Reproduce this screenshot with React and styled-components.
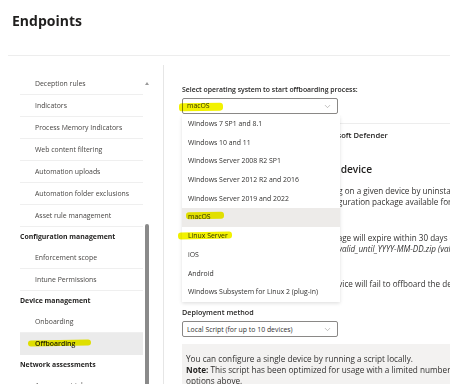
import React from 'react';
import styled, { createGlobalStyle } from 'styled-components';
import { ChevronDown } from 'lucide-react';

const GlobalStyle = createGlobalStyle`
  html, body {
    margin: 0;
    padding: 0;
    background: #fff;
    overflow: hidden;
  }
  body {
    font-family: 'Open Sans', 'Noto Sans', sans-serif;
    color: #323130;
  }
`;

const Page = styled.div`
  width: 450px;
  height: 384px;
  overflow: hidden;
`;

const Header = styled.header`
  height: 56px;
  margin-left: 8px;
  padding: 11px 0 0 4px;
  box-sizing: border-box;
  border-bottom: 1px solid #ededed;
`;

const Title = styled.h1`
  margin: 0;
  font-size: 14px;
  line-height: 20px;
  font-weight: 700;
  color: #201f1e;
`;

const Body = styled.div`
  display: flex;
  padding-top: 9px;
  height: 330px;
`;

const Nav = styled.nav`
  width: 123px;
  margin-left: 20px;
  padding-top: 8px;
  flex-shrink: 0;
`;

const NavGroup = styled.div`
  height: 20px;
  line-height: 20px;
  font-size: 6.9px;
  font-weight: 700;
  color: #201f1e;
  white-space: nowrap;
`;

const NavItem = styled.div`
  height: 22px;
  line-height: 22px;
  padding-left: 15px;
  font-size: 6.9px;
  font-weight: ${p => (p.$active ? 600 : 400)};
  color: ${p => (p.$active ? '#201f1e' : '#484644')};
  background: ${p => (p.$active ? '#ebebeb' : 'transparent')};
  border-bottom: 1px solid ${p => (p.$active ? '#ebebeb' : '#efefef')};
  box-sizing: border-box;
  white-space: nowrap;
`;

const Scrollbar = styled.div`
  width: 7px;
  margin-right: 13px;
  padding-top: 8px;
  display: flex;
  flex-direction: column;
  align-items: center;
  flex-shrink: 0;
`;

const ArrowUp = styled.div`
  width: 0;
  height: 0;
  margin-top: 9px;
  border-left: 2.5px solid transparent;
  border-right: 2.5px solid transparent;
  border-bottom: 3px solid #9a9a9a;
`;

const Thumb = styled.div`
  width: 4px;
  margin-top: 139px;
  flex: 1;
  border-radius: 2px;
  background: #8a8a8a;
`;

const Main = styled.main`
  position: relative;
  flex-shrink: 0;
  width: 420px;
  border-left: 1px solid #e6e6e6;
  padding: 20px 0 0 18px;
`;

const Label = styled.div`
  font-size: ${p => p.$size || 6.9}px;
  line-height: 10px;
  font-weight: 600;
  color: #201f1e;
  margin-top: ${p => p.$top || 0}px;
  margin-bottom: ${p => p.$gap || 3}px;
  white-space: nowrap;
`;

const SelectWrap = styled.div`
  position: relative;
  width: 156px;
`;

const SelectBox = styled.div`
  height: 16px;
  box-sizing: border-box;
  border: 1px solid #8a8886;
  border-radius: 2px;
  padding: 0 5px 0 4px;
  display: flex;
  align-items: center;
  justify-content: space-between;
  font-size: 6.9px;
  color: #323130;
  background: #fff;
  white-space: nowrap;

  svg {
    color: #8a8886;
  }
`;

const Menu = styled.ul`
  position: absolute;
  top: calc(100% + 1px);
  left: 0;
  width: 158px;
  margin: 0;
  padding: 0;
  list-style: none;
  background: #fff;
  box-shadow: 0 1.6px 3.6px rgba(0, 0, 0, 0.13), 0 0.3px 0.9px rgba(0, 0, 0, 0.11);
  z-index: 5;
`;

const Option = styled.li`
  height: 18.7px;
  line-height: 18.7px;
  padding-left: 6px;
  font-size: 6.9px;
  color: #323130;
  background: ${p => (p.$selected ? '#edebe9' : '#fff')};
  white-space: nowrap;
`;

const Marker = styled.span`
  position: relative;
  display: inline-block;
  line-height: 10px;

  &::after {
    content: '';
    position: absolute;
    left: ${p => p.$l}px;
    right: ${p => p.$r}px;
    top: ${p => p.$t}px;
    height: ${p => p.$h}px;
    background: #f2f200;
    border-radius: 3px;
    transform: rotate(${p => p.$rot || -1}deg);
    mix-blend-mode: multiply;
  }
`;

const Section = styled.section`
  margin-top: 9px;
  border-top: 1px solid #ededed;
  padding-top: 6px;
`;

const Caption = styled.div`
  font-size: 7.6px;
  line-height: 10px;
  font-weight: 600;
  color: #201f1e;
  white-space: nowrap;
`;

const Heading = styled.h3`
  margin: 22px 0 0;
  font-size: 10.2px;
  line-height: 14px;
  font-weight: 600;
  color: #201f1e;
  white-space: nowrap;
`;

const Para = styled.p`
  margin: ${p => p.$top}px 0 0;
  font-size: 8.1px;
  line-height: 11px;
  color: #323130;
  white-space: nowrap;

  em {
    font-style: italic;
  }
`;

const Block = styled.div`
  margin-top: 7px;
  padding: 9px 4px 0;
  height: 60px;
  background: #f3f2f1;
  font-size: 8.2px;
  line-height: 11px;
  color: #323130;
  white-space: nowrap;

  b {
    font-weight: 700;
    color: #201f1e;
  }
`;

const navRows = [
  { label: 'Deception rules' },
  { label: 'Indicators' },
  { label: 'Process Memory Indicators' },
  { label: 'Web content filtering' },
  { label: 'Automation uploads' },
  { label: 'Automation folder exclusions' },
  { label: 'Asset rule management' },
  { label: 'Configuration management', group: true },
  { label: 'Enforcement scope' },
  { label: 'Intune Permissions' },
  { label: 'Device management', group: true },
  { label: 'Onboarding' },
  { label: 'Offboarding', active: true },
  { label: 'Network assessments', group: true },
  { label: 'Assessment jobs' },
];

const systems = [
  'Windows 7 SP1 and 8.1',
  'Windows 10 and 11',
  'Windows Server 2008 R2 SP1',
  'Windows Server 2012 R2 and 2016',
  'Windows Server 2019 and 2022',
  'macOS',
  'Linux Server',
  'iOS',
  'Android',
  'Windows Subsystem for Linux 2 (plug-in)',
];

function OptionLabel({ name }) {
  if (name === 'macOS') {
    return <Marker $l={-2} $r={-13} $t={0} $h={7}>{name}</Marker>;
  }
  if (name === 'Linux Server') {
    return <Marker $l={-10} $r={-4} $t={0.5} $h={7}>{name}</Marker>;
  }
  return name;
}

export default function App() {
  return (
    <Page>
      <GlobalStyle />
      <Header>
        <Title>Endpoints</Title>
      </Header>
      <Body>
        <Nav>
          {navRows.map(row =>
            row.group ? (
              <NavGroup key={row.label}>{row.label}</NavGroup>
            ) : (
              <NavItem key={row.label} $active={row.active}>
                {row.active ? (
                  <Marker $l={-7} $r={-16} $t={1} $h={6}>{row.label}</Marker>
                ) : (
                  row.label
                )}
              </NavItem>
            )
          )}
        </Nav>
        <Scrollbar>
          <ArrowUp />
          <Thumb />
        </Scrollbar>
        <Main>
          <Label>Select operating system to start offboarding process:</Label>
          <SelectWrap>
            <SelectBox>
              <Marker $l={-8} $r={-13} $t={2} $h={8}>macOS</Marker>
              <ChevronDown size={9} strokeWidth={1.4} />
            </SelectBox>
            <Menu>
              {systems.map(name => (
                <Option key={name} $selected={name === 'macOS'}>
                  <OptionLabel name={name} />
                </Option>
              ))}
            </Menu>
          </SelectWrap>
          <Section>
            <Caption>Devices will no longer report data to Microsoft Defender</Caption>
            <Heading>Offboard and then disconnect a device</Heading>
            <Para $top={9}>
              Offboarding ends all sensor data reporting on a given device by uninstalling the onboarding package.
              <br />
              Complete this using the offboarding configuration package available for download below.
            </Para>
            <Para $top={25}>
              For security reasons, an offboarding package will expire within 30 days of download.
              <br />
              The filename is <em>mde_offboarding_package_valid_until_YYYY-MM-DD.zip (valid for 30 days)</em>
            </Para>
            <Para $top={24}>
              Using the expired offboarding file on a device will fail to offboard the device.
            </Para>
          </Section>
          <Label $size={7.2} $top={18} $gap={4}>Deployment method</Label>
          <SelectWrap>
            <SelectBox>
              <span>Local Script (for up to 10 devices)</span>
              <ChevronDown size={9} strokeWidth={1.4} />
            </SelectBox>
          </SelectWrap>
          <Block>
            You can configure a single device by running a script locally.
            <br />
            <b>Note:</b> This script has been optimized for usage with a limited number of devices (1-10). To deploy at scale, please see other deployment
            <br />
            options above.
          </Block>
        </Main>
      </Body>
    </Page>
  );
}
